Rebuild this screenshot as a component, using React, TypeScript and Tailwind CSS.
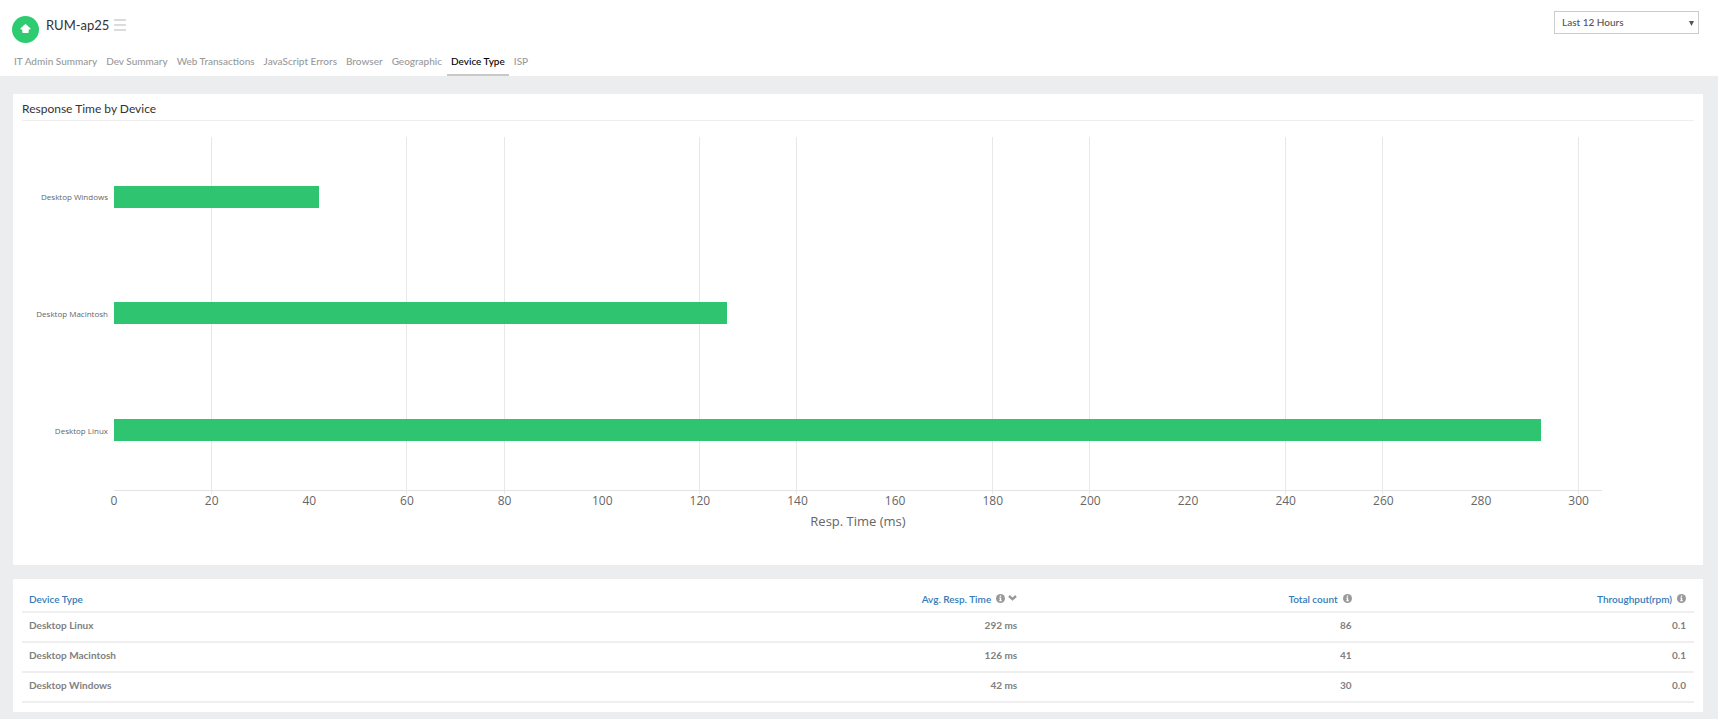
import { useState } from 'react';

import clsx from 'clsx';

const TABS = [
   'IT Admin Summary',
   'Dev Summary',
   'Web Transactions',
   'JavaScript Errors',
   'Browser',
   'Geographic',
   'Device Type',
   'ISP',
];

const PERIODS = ['Last 12 Hours', 'Last 24 Hours', 'Last 7 Days'];

const DEVICES = [
   { name: 'Desktop Linux', time: 292.4, count: 86, throughput: '0.1' },
   { name: 'Desktop Macintosh', time: 125.5, count: 41, throughput: '0.1' },
   { name: 'Desktop Windows', time: 42, count: 30, throughput: '0.0' },
];

const AXIS_MAX = 304.8;
const TICK_STEP = 20;
const TICKS = Array.from({ length: 16 }, (_, i) => i * TICK_STEP);

const percent = (value: number) => `${(value / AXIS_MAX) * 100}%`;

export default function App() {
   return (
      <div className="min-h-screen bg-[#ecedef] pb-[7px] font-['Lato',sans-serif] text-[#333]">
         <Header />
         <main className="flex flex-col gap-[14px] pt-[18px] pr-[15px] pl-[13px]">
            <ResponseTimeSection />
            <DeviceTableSection />
         </main>
      </div>
   );
}

function Header() {
   const [activeTab, setActiveTab] = useState('Device Type');

   return (
      <header className="bg-white">
         <div className="flex h-12 items-start justify-between pr-[19px] pl-3">
            <div className="flex items-start pt-4">
               <StatusUpIcon />
               <h1 className="ml-[7px] text-[13px] leading-[19px]">RUM-ap25</h1>
               <button type="button" aria-label="Menu" className="mt-[3px] ml-[5px]">
                  <svg width="12" height="12" viewBox="0 0 12 12">
                     <path
                        d="M0 1h12M0 6h12M0 11h12"
                        stroke="#cfcfcf"
                        strokeWidth="1.5"
                     />
                  </svg>
               </button>
            </div>
            <PeriodSelect />
         </div>

         <nav className="flex h-7 gap-px pl-[10px]">
            {TABS.map((tab) => (
               <a
                  key={tab}
                  href="#"
                  onClick={() => setActiveTab(tab)}
                  className={clsx(
                     'border-b-2 px-1 pt-[5px] text-[10px] leading-4 font-medium',
                     tab === activeTab
                        ? 'border-[#c8c8c8] text-black'
                        : 'border-transparent text-[#999]',
                  )}
               >
                  {tab}
               </a>
            ))}
         </nav>
      </header>
   );
}

function PeriodSelect() {
   return (
      <div className="relative mt-[11px]">
         <select
            aria-label="Period"
            className="block h-[23px] w-[145px] appearance-none border border-[#ccc] bg-white pl-[7px] text-[10px] font-medium text-[#555]"
         >
            {PERIODS.map((period) => (
               <option key={period}>{period}</option>
            ))}
         </select>
         <svg
            width="5"
            height="5"
            viewBox="0 0 5 5"
            className="pointer-events-none absolute top-[10px] right-[5px]"
         >
            <path d="M0 0h5L2.5 5z" fill="#555" />
         </svg>
      </div>
   );
}

function ResponseTimeSection() {
   // the chart lists the fastest device first
   const bars = [...DEVICES].reverse();

   return (
      <section className="bg-white px-[9px] pb-[33px]">
         <h2 className="border-b border-[#eee] pt-[6px] pb-[2px] text-[12px] leading-[18px]">
            Response Time by Device
         </h2>

         <div className="mt-4 flex pr-[92px] font-['Open_Sans',sans-serif] text-[#666]">
            <div className="flex h-[354px] w-[92px] shrink-0 flex-col py-[2px] pr-[6px] text-right text-[8px]">
               {bars.map((bar) => (
                  <div
                     key={bar.name}
                     className="flex flex-1 items-center justify-end whitespace-nowrap"
                  >
                     {bar.name}
                  </div>
               ))}
            </div>

            <div className="min-w-0 flex-1">
               <div className="relative h-[354px] border-b border-[#e3e3e3]">
                  {TICKS.map((tick, i) => (
                     <div
                        key={tick}
                        className={clsx(
                           'absolute top-0 -bottom-[4px] -ml-px w-px',
                           i % 3 !== 2 && i > 0 && 'bg-[#e8e8e8]',
                        )}
                        style={{ left: percent(tick) }}
                     />
                  ))}
                  <div className="relative flex h-full flex-col py-[2px]">
                     {bars.map((bar) => (
                        <div key={bar.name} className="flex flex-1 items-center">
                           <div
                              className="h-[22px] bg-[#26c26a]/96"
                              style={{ width: percent(bar.time) }}
                           />
                        </div>
                     ))}
                  </div>
               </div>

               <div
                  className="flex text-center text-[12px] leading-[20px]"
                  style={{
                     marginLeft: `-${percent(TICK_STEP / 2)}`,
                     width: percent(TICK_STEP * TICKS.length),
                  }}
               >
                  {TICKS.map((tick) => (
                     <span key={tick} className="flex-1">
                        {tick}
                     </span>
                  ))}
               </div>
               <div className="text-center text-[13px] leading-[21px]">
                  Resp. Time (ms)
               </div>
            </div>
         </div>
      </section>
   );
}

function DeviceTableSection() {
   return (
      <section className="bg-white px-[9px] pt-[6px] pb-[9px]">
         <table className="w-full table-fixed border-collapse text-[10px] text-[#808080]">
            <thead>
               <tr className="h-[27px] border-b-2 border-[#efefef] text-[#337ab7]">
                  <th className="w-2/5 px-[7px] pt-[2px] text-left font-semibold">
                     Device Type
                  </th>
                  <th className="px-2 pt-[2px] text-right font-semibold">
                     <span className="inline-flex items-center">
                        Avg. Resp. Time
                        <InfoIcon />
                        <SortDownIcon />
                     </span>
                  </th>
                  <th className="px-2 pt-[2px] text-right font-semibold">
                     <span className="inline-flex items-center">
                        Total count
                        <InfoIcon />
                     </span>
                  </th>
                  <th className="px-2 pt-[2px] text-right font-semibold">
                     <span className="inline-flex items-center">
                        Throughput(rpm)
                        <InfoIcon />
                     </span>
                  </th>
               </tr>
            </thead>
            <tbody>
               {DEVICES.map((device) => (
                  <tr
                     key={device.name}
                     className="h-[30px] border-b-2 border-[#efefef] text-right font-bold"
                  >
                     <td className="px-[7px] pb-1 text-left">{device.name}</td>
                     <td className="px-2 pb-1">{Math.round(device.time)} ms</td>
                     <td className="px-2 pb-1">{device.count}</td>
                     <td className="px-2 pb-1">{device.throughput}</td>
                  </tr>
               ))}
            </tbody>
         </table>
      </section>
   );
}

function StatusUpIcon() {
   return (
      <svg width="27" height="27" viewBox="0 0 27 27">
         <circle cx="13.5" cy="13.5" r="13.5" fill="#2ecc71" />
         <path
            d="M13.5 7.8 L18.6 12.6 Q18.8 13.4 18 13.4 H16.7 V16.2 Q16.7 17 16 17 H11 Q10.3 17 10.3 16.2 V13.4 H9 Q8.2 13.4 8.4 12.6 Z"
            fill="#fff"
         />
      </svg>
   );
}

function InfoIcon() {
   return (
      <svg
         width="9"
         height="9"
         viewBox="0 0 9 9"
         className="mb-[2px] ml-[5px]"
      >
         <circle cx="4.5" cy="4.5" r="4.5" fill="#999" />
         <path
            d="M3.8 1.6h1.4v1.2H3.8zM3.3 3.6h1.9v2.6h.6v1H3.2v-1h.6V4.5h-.5z"
            fill="#fff"
         />
      </svg>
   );
}

function SortDownIcon() {
   return (
      <svg
         width="9"
         height="6"
         viewBox="0 0 9 6"
         className="mb-[2px] ml-[3px]"
      >
         <path d="M1 1l3.5 3.2L8 1" fill="none" stroke="#999" strokeWidth="2.4" />
      </svg>
   );
}
